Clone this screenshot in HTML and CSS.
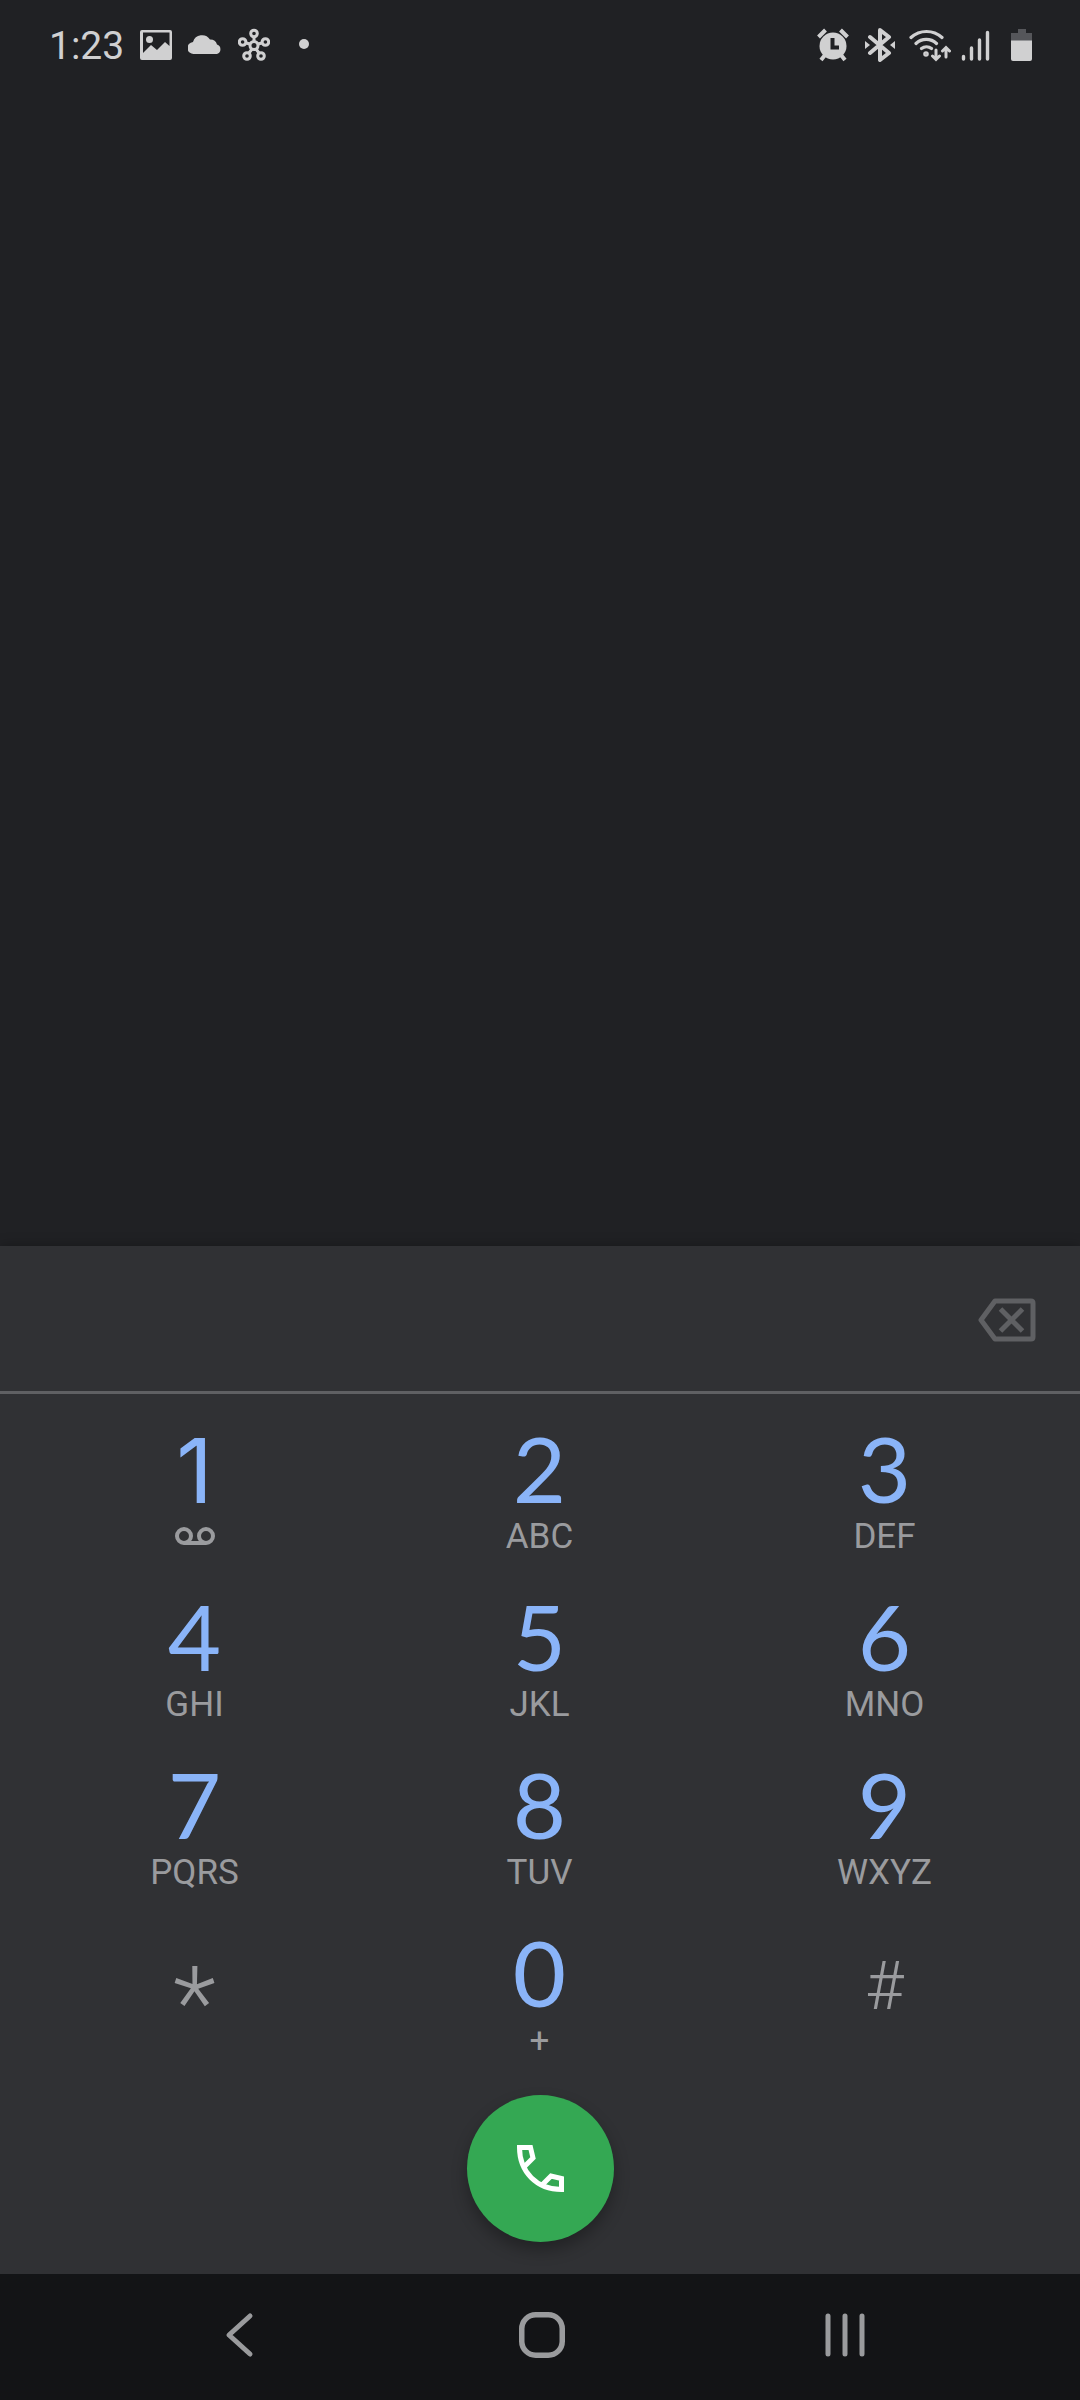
FILE: index.html
```html
<!DOCTYPE html>
<html lang="en">
<head>
<meta charset="utf-8">
<meta name="viewport" content="width=device-width, initial-scale=1">
<title>Phone</title>
<link rel="stylesheet" href="styles.css">
</head>
<body>
<div class="screen">
  <header class="status">
    <div class="status-left">
      <time class="clock">1:23</time>
      <svg width="32" height="34" viewBox="0 0 32 34" aria-hidden="true"><path fill-rule="evenodd" fill="currentColor" d="M2 2h28q2 0 2 2v26q0 2-2 2H2q-2 0-2-2V4q0-2 2-2zM3 4.500v20.500l8-8 6 5 8-8 4.500 4V4.500z"/><circle cx="9.500" cy="11.500" r="3.500" fill="currentColor"/></svg>
      <svg width="34" height="34" viewBox="0 0 34 34" aria-hidden="true"><path fill="currentColor" d="M6 26a6 6 0 0 1-1-12A9.500 9.500 0 0 1 22 11.500a7 7 0 0 1 7 5A5 5 0 0 1 29 26z"/></svg>
      <svg width="32" height="34" viewBox="0 0 32 34" aria-hidden="true" fill="none" stroke="currentColor" stroke-width="3"><circle cx="16" cy="17.500" r="4"/><circle cx="16" cy="5.500" r="3.300"/><circle cx="4.600" cy="14" r="3.300"/><circle cx="27.400" cy="14" r="3.300"/><circle cx="9" cy="28" r="3.300"/><circle cx="23" cy="28" r="3.300"/><path d="M16 9v4M8 15l4 1M24 15l-4 1M11 25l3-4M21 25l-3-4"/></svg>
      <svg width="34" height="34" viewBox="0 0 34 34" aria-hidden="true"><circle cx="18" cy="16" r="5" fill="currentColor"/></svg>
    </div>
    <div class="status-right">
      <svg width="38" height="34" viewBox="0 0 38 34" aria-hidden="true"><g fill="none" stroke="currentColor" stroke-width="4"><path d="M1.500 9l7-7M30.500 9l-7-7M4 32l4-5M28 32l-4-5"/></g><circle cx="16" cy="18" r="13.500" fill="currentColor"/><path class="cutout" d="M15.500 10v9.500H22" fill="none" stroke-width="4"/></svg>
      <svg width="34" height="34" viewBox="0 0 34 34" aria-hidden="true"><path fill="none" stroke="currentColor" stroke-width="4" stroke-linejoin="round" stroke-linecap="round" d="M5 9l19 16-9 7V2l9 7L5 25"/><path fill="currentColor" d="M0 13l5 4-5 4zM30 13l-5 4 5 4z"/></svg>
      <svg width="42" height="34" viewBox="0 0 42 34" aria-hidden="true" fill="none" stroke="currentColor" stroke-width="3.200" stroke-linecap="round"><path d="M2 9.500a23 23 0 0 1 31 0M7 15.500a15 15 0 0 1 20.500 0M12.500 20.500a8 8 0 0 1 10 0"/><circle cx="17" cy="26" r="1.200"/><path stroke-width="3" d="M27 22v9M23.500 28l3.500 3.500 3.500-3.500M37 29v-9M33.500 23l3.500-3.500 3.500 3.500"/></svg>
      <svg width="40" height="34" viewBox="0 0 40 34" aria-hidden="true" fill="none" stroke="currentColor" stroke-width="3.400" stroke-linecap="round"><path d="M2.500 28.500v2.500M10.500 20v11M18.500 12v19M26.500 4.500v26.500"/></svg>
      <svg width="22" height="34" viewBox="0 0 22 34" aria-hidden="true"><path fill="#55565a" d="M7 1h8v4h6v8H0V5h7z"/><path fill="currentColor" d="M0 12.500h21V31q0 2-2 2H2q-2 0-2-2z"/></svg>
    </div>
  </header>

  <main class="backdrop"></main>

  <section class="dialer" aria-label="Dial pad">
    <div class="entry">
      <input class="number" type="tel" aria-label="Phone number">
      <button class="backspace" type="button" aria-label="Backspace">
        <svg width="58" height="44" viewBox="0 0 58 44" fill="none" stroke="currentColor" stroke-width="5"><path stroke-linejoin="round" d="M17 3h36q2 0 2 2v34q0 2-2 2H17L3 22z"/><path d="M22.500 11l22 22M44.500 11l-22 22"/></svg>
      </button>
    </div>

    <div class="keys">
      <button class="key" type="button"><span class="digit"><span class="one">1</span></span><span class="letters"><svg width="40" height="20" viewBox="0 0 40 20" role="img" aria-label="Voicemail" fill="none" stroke="currentColor" stroke-width="4"><circle cx="9" cy="9" r="7"/><circle cx="31" cy="9" r="7"/><path d="M9 16h22"/></svg></span></button>
      <button class="key" type="button"><span class="digit">2</span><span class="letters">ABC</span></button>
      <button class="key" type="button"><span class="digit">3</span><span class="letters">DEF</span></button>
      <button class="key" type="button"><span class="digit">4</span><span class="letters">GHI</span></button>
      <button class="key" type="button"><span class="digit">5</span><span class="letters">JKL</span></button>
      <button class="key" type="button"><span class="digit">6</span><span class="letters">MNO</span></button>
      <button class="key" type="button"><span class="digit">7</span><span class="letters">PQRS</span></button>
      <button class="key" type="button"><span class="digit">8</span><span class="letters">TUV</span></button>
      <button class="key" type="button"><span class="digit">9</span><span class="letters">WXYZ</span></button>
      <button class="key symbol star" type="button">*</button>
      <button class="key" type="button"><span class="digit">0</span><span class="letters">+</span></button>
      <button class="key symbol" type="button">#</button>
    </div>

    <div class="actions">
      <button class="call" type="button" aria-label="Call">
        <svg width="47" height="47" viewBox="0 0 47 47" fill="none" stroke="currentColor" stroke-width="5"><path d="M7 22l9-9-2.500-10.500h-11C2.500 27 20 44.500 44.500 44.500v-11L34 31l-9 9"/></svg>
      </button>
    </div>
  </section>

  <nav class="navbar" aria-label="System">
    <button type="button" aria-label="Back"><svg width="46" height="46" viewBox="0 0 46 46" fill="none" stroke="currentColor" stroke-width="5" stroke-linecap="round" stroke-linejoin="round"><path d="M34 4L13 23l21 19"/></svg></button>
    <button type="button" aria-label="Home"><svg width="46" height="46" viewBox="0 0 46 46" fill="none" stroke="currentColor" stroke-width="5.500"><rect x="2.750" y="2.750" width="40.500" height="40.500" rx="14"/></svg></button>
    <button type="button" aria-label="Recent apps"><svg width="46" height="46" viewBox="0 0 46 46" fill="none" stroke="currentColor" stroke-width="5" stroke-linecap="round"><path d="M6 4v38M23 4v38M40 4v38"/></svg></button>
  </nav>
</div>
</body>
</html>
```
FILE: styles.css
```css
* {
  box-sizing: border-box;
}

body {
  margin: 0;
  background: #202124;
  font-family: Roboto, "Liberation Sans", sans-serif;
}

button {
  display: flex;
  align-items: center;
  justify-content: center;
  margin: 0;
  padding: 0;
  border: 0;
  background: none;
  color: inherit;
  font: inherit;
}

svg {
  display: block;
  flex: none;
}

.screen {
  display: flex;
  flex-direction: column;
  min-height: 100vh;
}

.status {
  display: flex;
  justify-content: space-between;
  align-items: center;
  height: 90px;
  padding: 0 47px 0 49px;
  color: #d0d0d1;
}

.status-left,
.status-right {
  display: flex;
  align-items: center;
}

.status-left {
  gap: 16px;
}

.status-right {
  gap: 10px;
}

.clock {
  padding-top: 2px;
  font-size: 39px;
  line-height: 46px;
}

.cutout {
  stroke: #202124;
}

.backdrop {
  flex: 1;
}

.dialer {
  background: #303134;
  box-shadow: 0 0 12px rgba(0, 0, 0, 0.3);
}

.entry {
  display: flex;
  align-items: center;
  height: 148px;
  padding: 2px 44px 0 0;
  border-bottom: 3px solid #5f6063;
}

.number {
  flex: 1;
  min-width: 0;
  height: 100%;
  padding: 0 44px;
  border: 0;
  outline: 0;
  background: none;
  color: #e8eaed;
  font: 60px Roboto, sans-serif;
  text-align: center;
}

.backspace {
  color: #5f6063;
}

.keys {
  display: grid;
  grid-template-columns: repeat(3, 1fr);
  grid-auto-rows: 168px;
  padding: 0 23px 0 22px;
}

.key {
  flex-direction: column;
  justify-content: flex-start;
  padding-top: 25px;
  color: #9a9b9e;
}

.digit {
  height: 98px;
  color: #8ab4f8;
  font-family: Lato, sans-serif;
  font-size: 92px;
  line-height: 98px;
}

.one {
  font-family: Inter, sans-serif;
  font-size: 90px;
  line-height: 1px;
}

.letters {
  display: flex;
  align-items: center;
  height: 40px;
  font-size: 35px;
  line-height: 40px;
}

.symbol {
  justify-content: center;
  padding-top: 8px;
  font-size: 66px;
  font-weight: 300;
}

.star {
  padding-top: 40px;
  font-size: 100px;
}

.actions {
  display: flex;
  justify-content: center;
  padding: 29px 0 32px;
}

.call {
  width: 147px;
  height: 147px;
  border-radius: 50%;
  background: #34a853;
  color: #fff;
  box-shadow: 0 8px 16px rgba(0, 0, 0, 0.3);
}

.navbar {
  display: flex;
  align-items: center;
  justify-content: center;
  gap: 257px;
  height: 126px;
  padding: 0 0 4px 3px;
  background: #131416;
  color: #9a9b9d;
}
```
